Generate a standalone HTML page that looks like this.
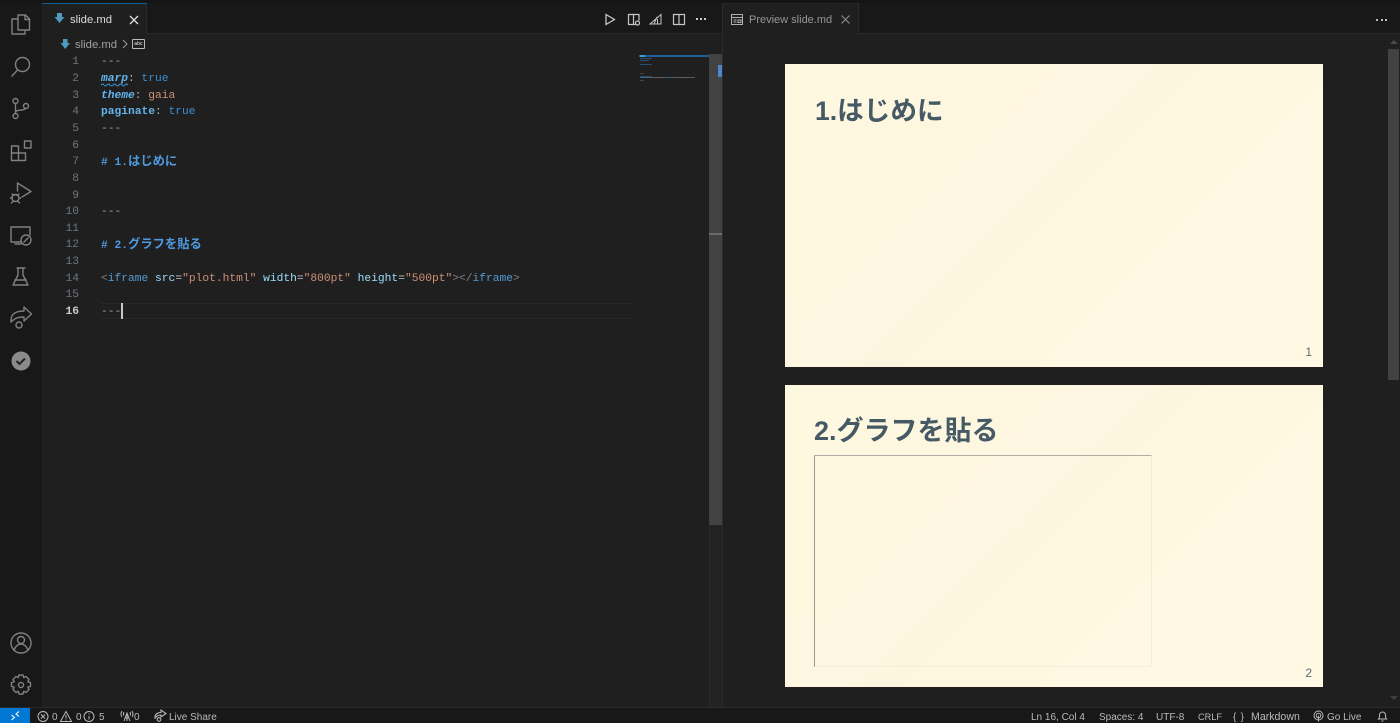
<!DOCTYPE html>
<html lang="ja"><head><meta charset="utf-8"><title>slide.md</title>
<style>
html,body{margin:0;padding:0;width:1400px;height:723px;overflow:hidden;background:#1f1f1f}
body{position:relative;font-family:"Liberation Sans","Noto Sans CJK JP",sans-serif;color:#ccc}
.a{position:absolute}
svg{position:absolute;overflow:visible;fill:none}
.ln,.cl{position:absolute;font:11.25px/17px "Liberation Mono","Noto Sans CJK JP",monospace;white-space:pre;height:17px}
.ln{left:50px;width:29px;text-align:right;color:#6e7681}
.cl{left:101px;color:#c0c0c0}
.j{font-size:12.3px}
.h{color:#4f9be0;font-weight:bold}.k{color:#62b5ee;font-weight:bold}.v{color:#3f8fd2}.s{color:#ce9178}.t{color:#a0a0a0}.b{color:#808080}.tg{color:#569cd6}.at{color:#9cdcfe}.c{color:#b0b0b0;font-weight:normal}
.ab{stroke:#808080;stroke-width:1.4;stroke-linejoin:round;stroke-linecap:round}
.tb{stroke:#c5c5c5;stroke-width:1.2}
.st{position:absolute;top:709px;height:14px;font-size:10px;line-height:17px;color:#b9b9b9;white-space:pre}
.slide{position:absolute;left:785px;width:538px;background-color:#fff8e1;background-image:linear-gradient(135deg,rgba(136,136,136,0),rgba(136,136,136,.02) 50%,rgba(255,255,255,0) 50%,rgba(255,255,255,.05))}
.slide h1{position:absolute;left:30px;margin:0;font-size:27px;line-height:34px;font-weight:bold;color:#455a64;white-space:pre}
.pg{position:absolute;right:11px;font-size:12px;line-height:14px;color:#5a6b73}
</style></head><body>
<div class="a" style="left:0;top:0;width:1400px;height:3px;background:#141414"></div>
<div class="a" style="left:0;top:3px;width:42px;height:704px;background:#181818;border-right:1px solid #222"></div>
<div class="a" style="left:42px;top:3px;width:680px;height:30px;background:#181818"></div>
<div class="a" style="left:723px;top:3px;width:677px;height:30px;background:#181818"></div>
<div class="a" style="left:42px;top:33px;width:1358px;height:1px;background:#2a2a2a"></div>
<div class="a" style="left:722px;top:3px;width:1px;height:704px;background:#2b2b2b"></div>

<svg class="ab" style="left:0;top:0" width="42" height="707" viewBox="0 0 42 707">
<path d="M18 15h7.500l4 4v11H18z M17.500 19H12v15h13v-3.500 M25 15v4.500h4.500"/>
<circle cx="22.500" cy="64.500" r="7"/><path d="M17.500 70L12 76"/>
<circle cx="15.500" cy="101" r="2.500"/><circle cx="15.500" cy="116" r="2.500"/><circle cx="26" cy="106" r="2.500"/><path d="M15.500 103.500v10M15.500 112c1-3 9-1 10-3.500"/>
<path d="M11.500 146h7v7h-7zM11.500 153h7v7.500h-7zM18.500 153h7v7.500h-7zM24.500 141h6.500v7h-6.500z"/>
<path d="M17.500 183l13.500 8.500-9 5.500M17.500 183v8"/><circle cx="15.500" cy="198" r="3.500"/><path d="M12 194l2 1.500M19 194l-2 1.500M10.500 198h1.500M19 198h1.500M11.500 203l2-2M19.500 203l-2-2"/>
<path d="M21 242h-10v-15h19v8M15 244h6"/><circle cx="26" cy="240" r="5"/><path d="M24 242l4-4"/>
<path d="M17 268h8M18 268v7l-5 10h15l-5-10v-7M15 280h11"/>
<path d="M11 320c0-6 5-9 13-9v-4l7.500 7-7.500 7v-4c-6 0-9 1-13 5z"/><circle cx="19" cy="325" r="3"/>
<circle cx="21" cy="643" r="10"/><circle cx="21" cy="640" r="3.500"/><path d="M14 650.500c1-4 4-6.500 7-6.500s6 2.500 7 6.500"/>
<circle cx="21" cy="685" r="2.500"/><path d="M19 675h4l.7 2.500 2.300-1 3 3-1.200 2.300 2.700.7v4l-2.700.7 1.200 2.300-3 3-2.300-1.200-.7 2.700h-4l-.7-2.700-2.300 1.200-3-3 1.200-2.300-2.700-.7v-4l2.700-.7-1.200-2.300 3-3 2.300 1z"/>
</svg>
<svg style="left:0;top:0" width="42" height="400"><circle cx="21" cy="361" r="9.500" fill="#8a8a8a"/><path d="M16.500 361l3 3 5.500-5.500" stroke="#222" stroke-width="2"/></svg>

<div class="a" style="left:42px;top:3px;width:105px;height:31px;background:#1f1f1f;border-top:1px solid #0e639c;box-sizing:border-box;border-right:1px solid #2a2a2a"></div>
<svg style="left:54px;top:13px" width="12" height="11"><path d="M3 0h5v4h2.500L5.500 10 .5 4H3z" fill="#519aba"/></svg>
<div class="a" style="left:70px;top:12px;font-size:11.3px;line-height:17px;color:#ddd">slide.md</div>
<svg style="left:129px;top:15px" width="10" height="10"><path d="M1 1l8 8M9 1l-8 8" stroke="#ddd" stroke-width="1.300"/></svg>

<svg style="left:60px;top:39px" width="11" height="10"><path d="M3 0h4.500v4H10L5.200 10 .5 4H3z" fill="#519aba"/></svg>
<div class="a" style="left:75px;top:37px;font-size:11.3px;line-height:17px;color:#a0a0a0">slide.md</div>
<svg style="left:122px;top:39px" width="6" height="10"><path d="M1 1l4 4-4 4" stroke="#999" stroke-width="1.100"/></svg>
<div class="a" style="left:132px;top:39px;width:11px;height:8px;border:1px solid #bbb;border-radius:1px;font:bold 5px/8px 'Liberation Sans',sans-serif;color:#bbb;text-align:center">abc</div>

<svg class="tb" style="left:0;top:0" width="720" height="30">
<path d="M606 14.500l8.500 5-8.500 5z" stroke="#d0d0d0"/>
<path d="M628.500 14.500h5v10h-5zM633.500 14.500h5.500v6M633.500 24.500h2"/><circle cx="637.500" cy="23" r="2"/>
<path d="M650 24l11-9.500v9.500zM654 24l3-7M657.500 24v-5" stroke-width="1"/>
<path d="M673.500 14.500h11v10h-11zM679 14.500v10"/>
</svg>
<div class="a" style="left:696px;top:18px;width:2px;height:2px;background:#ccc;box-shadow:4px 0 #ccc,8px 0 #ccc"></div>

<div class="ln" style="top:54px">1</div><div class="ln" style="top:71px">2</div><div class="ln" style="top:88px">3</div><div class="ln" style="top:104px">4</div><div class="ln" style="top:121px">5</div><div class="ln" style="top:138px">6</div><div class="ln" style="top:154px">7</div><div class="ln" style="top:171px">8</div><div class="ln" style="top:188px">9</div><div class="ln" style="top:204px">10</div><div class="ln" style="top:221px">11</div><div class="ln" style="top:237px">12</div><div class="ln" style="top:254px">13</div><div class="ln" style="top:271px">14</div><div class="ln" style="top:287px">15</div><div class="ln" style="top:304px;color:#ccc;font-weight:bold">16</div>

<div class="a" style="left:101px;top:303px;width:532px;height:14px;border-top:1px solid #282828;border-bottom:1px solid #282828"></div>
<div class="cl t" style="top:54px">---</div>
<div class="cl" style="top:71px"><span class="k"><i>marp</i></span><span class="c">:</span> <span class="v">true</span></div>
<svg style="left:101px;top:83px" width="30" height="4"><path d="M0 2q1.500-2 3 0t3 0 3 0 3 0 3 0 3 0 3 0 3 0 3 0" stroke="#3d9be0" stroke-width="1"/></svg>
<div class="cl" style="top:88px"><span class="k"><i>theme</i></span><span class="c">:</span> <span class="s">gaia</span></div>
<div class="cl" style="top:104px"><span class="k">paginate</span><span class="c">:</span> <span class="v">true</span></div>
<div class="cl t" style="top:121px">---</div>
<div class="cl h" style="top:154px"># 1.<span class="j">はじめに</span></div>
<div class="cl t" style="top:204px">---</div>
<div class="cl h" style="top:237px"># 2.<span class="j">グラフを貼る</span></div>
<div class="cl" style="top:271px"><span class="b">&lt;</span><span class="tg">iframe</span> <span class="at">src</span>=<span class="s">"plot.html"</span> <span class="at">width</span>=<span class="s">"800pt"</span> <span class="at">height</span>=<span class="s">"500pt"</span><span class="b">&gt;&lt;/</span><span class="tg">iframe</span><span class="b">&gt;</span></div>
<div class="cl t" style="top:304px">---</div>
<div class="a" style="left:121px;top:303px;width:2px;height:16px;background:#c8c8c8"></div>

<div class="a" style="left:639px;top:55px;width:70px;height:2px;background:#1f5f9f"></div>
<div class="a" style="left:640px;top:55px;width:5px;height:2px;background:#3d9be0"></div>
<div class="a" style="left:640px;top:58px;width:12px;height:1px;background:#2c526f"></div>
<div class="a" style="left:640px;top:60px;width:9px;height:1px;background:#2c526f"></div>
<div class="a" style="left:640px;top:64px;width:12px;height:1px;background:#264f6e"></div>
<div class="a" style="left:640px;top:73px;width:4px;height:1px;background:#444"></div>
<div class="a" style="left:640px;top:76px;width:12px;height:1px;background:#264f6e"></div>
<div class="a" style="left:640px;top:77px;width:55px;height:1px;background:linear-gradient(90deg,#34607d,#7a5a49 30%,#34607d 50%,#7a5a49 75%,#34607d)"></div>
<div class="a" style="left:640px;top:80px;width:4px;height:1px;background:#444"></div>

<div class="a" style="left:709px;top:54px;width:13px;height:471px;background:#424242"></div>
<div class="a" style="left:709px;top:525px;width:13px;height:182px;background:#232323;border-left:1px solid #2b2b2b;box-sizing:border-box"></div>
<div class="a" style="left:718px;top:65px;width:4px;height:12px;background:#4a88c7"></div>
<div class="a" style="left:709px;top:233px;width:13px;height:2px;background:#6a6a6a"></div>

<div class="a" style="left:723px;top:3px;width:136px;height:31px;background:#1f1f1f;border-right:1px solid #2a2a2a;box-sizing:border-box;border-top:1px solid #262626"></div>
<svg style="left:731px;top:14px" width="12" height="11"><path d="M.5.500h11v10H.5zM.5 3.500h11M2.500 6h3M2.500 8h3M7 6h3v2.500H7z" stroke="#b0b0b0" stroke-width="1"/></svg>
<div class="a" style="left:749px;top:12px;font-size:11px;line-height:17px;color:#969696">Preview slide.md</div>
<svg style="left:841px;top:15px" width="9" height="9"><path d="M.5.500l8 8M8.500.500l-8 8" stroke="#8a8a8a" stroke-width="1.200"/></svg>
<div class="a" style="left:1376px;top:19px;width:2px;height:2px;background:#bbb;box-shadow:5px 0 #bbb,9px 0 #bbb"></div>

<div class="slide" style="top:64px;height:303px"><h1 style="top:30px;font-size:26.6px">1.はじめに</h1><div class="pg" style="top:281px">1</div></div>
<div class="slide" style="top:385px;height:302px"><h1 style="top:29px;left:29px">2.グラフを貼る</h1>
<div class="a" style="left:29px;top:70px;width:338px;height:212px;box-sizing:border-box;border-style:solid;border-width:1px;border-color:#b0ada2 #f3edd9 #f3edd9 #9a9992"></div>
<div class="pg" style="top:281px">2</div></div>

<div class="a" style="left:1388px;top:49px;width:11px;height:331px;background:#424242"></div>
<svg style="left:1390px;top:40px" width="8" height="5"><path d="M4 0l4 4H0z" fill="#4a4a4a"/></svg>
<svg style="left:1390px;top:696px" width="8" height="5"><path d="M0 0h8L4 4z" fill="#3e3e3e"/></svg>

<div class="a" style="left:0;top:707px;width:1400px;height:16px;background:#181818;border-top:1px solid #2a2a2a;box-sizing:border-box"></div>
<div class="a" style="left:0;top:708px;width:30px;height:15px;background:#0078d4"></div>
<svg style="left:10px;top:710px" width="12" height="11"><path d="M1.500 5l3 2.500-3 2.500M9 1.500L6 4l3 2.500" stroke="#fff" stroke-width="1.100"/></svg>
<svg style="left:37px;top:710px" width="70" height="12"><g stroke="#b9b9b9" stroke-width="1"><circle cx="6" cy="6.500" r="5"/><path d="M4 4.500l4 4M8 4.500l-4 4"/><path d="M29 1.500l5.500 10h-11z"/><path d="M29 5v3.500M29 9.500v1"/><circle cx="52" cy="6.500" r="5"/><path d="M52 6v3.500M52 3.500v1"/></g></svg>
<div class="st" style="left:52px">0</div><div class="st" style="left:76px">0</div><div class="st" style="left:99px">5</div>
<svg style="left:120px;top:710px" width="14" height="12"><g stroke="#b9b9b9" stroke-width="1"><path d="M7 3v8M4 11l3-8 3 8M5 8h4M2 1Q0 4 2 7M12 1q2 3 0 6M4 2q-1 2 0 3.500M10 2q1 2 0 3.500"/></g></svg>
<div class="st" style="left:134px">0</div>
<svg style="left:154px;top:710px" width="13" height="12"><g stroke="#b9b9b9" stroke-width="1.100"><path d="M1 7c0-3 3-4.500 6-4.500V0l5 3.500L7 7V5C4 5 3 6 1 8z"/><circle cx="5" cy="9.500" r="1.800"/></g></svg>
<div class="st" style="left:169px">Live Share</div>

<div class="st" style="left:1031px">Ln 16, Col 4</div>
<div class="st" style="left:1099px">Spaces: 4</div>
<div class="st" style="left:1156px">UTF-8</div>
<div class="st" style="left:1198px;font-size:9.2px">CRLF</div>
<div class="st" style="left:1233px;word-spacing:1.5px">{ }</div>
<div class="st" style="left:1251px;font-size:10.6px">Markdown</div>
<svg style="left:1313px;top:711px" width="11" height="11"><g stroke="#b9b9b9" stroke-width="1"><circle cx="5.500" cy="4.500" r="4.500"/><circle cx="5.500" cy="4.500" r="2.300"/><path d="M5.500 4.500v6"/></g></svg>
<div class="st" style="left:1327px">Go Live</div>
<svg style="left:1377px;top:710px" width="11" height="12"><path d="M1.500 9c1-1 1-2 1-4a3 3 0 0 1 6 0c0 2 0 3 1 4zM4.500 11h2" stroke="#c0c0c0" stroke-width="1"/></svg>
</body></html>
